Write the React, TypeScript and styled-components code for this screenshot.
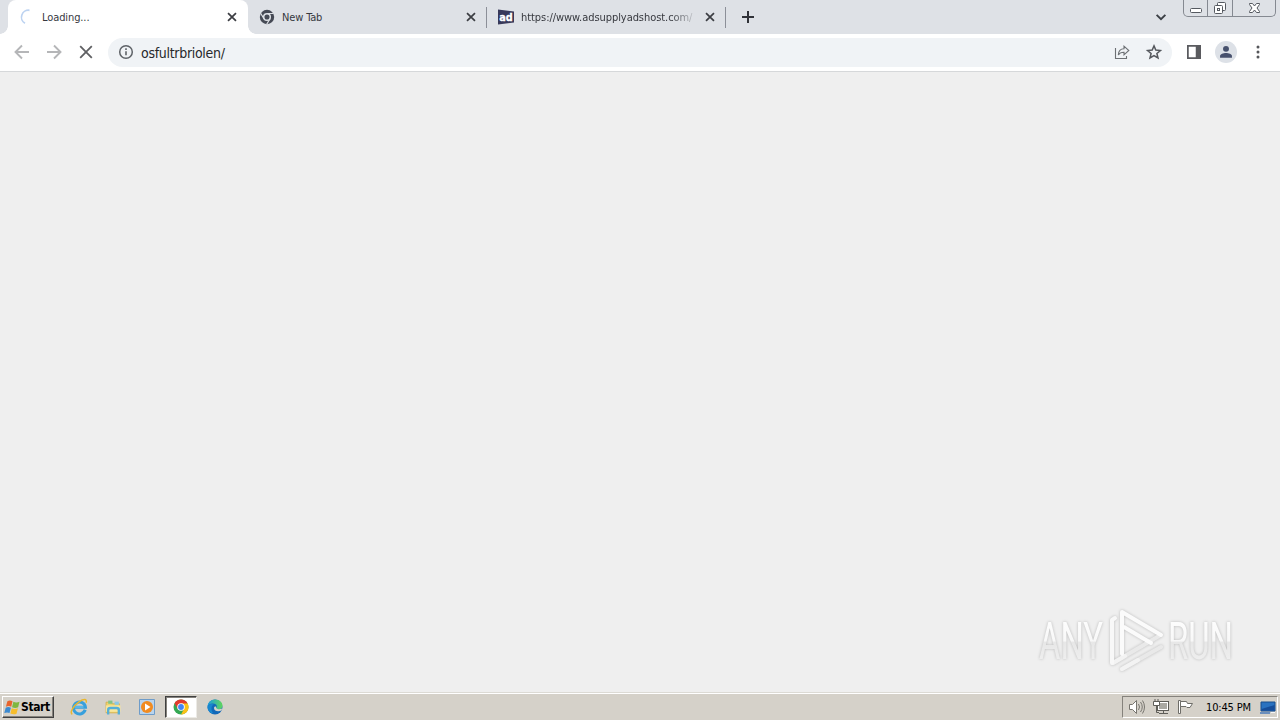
import type { ReactNode } from 'react';

import styled, { createGlobalStyle, css } from 'styled-components';

function App() {
  return (
    <Screen>
      <GlobalStyle />
      <TabStrip>
        <Tab $active>
          <Spinner />
          <TabTitle $spacing={-0.1}>Loading...</TabTitle>
          <CloseIcon />
        </Tab>
        <Tab>
          <ChromeGrayIcon />
          <TabTitle $spacing={-0.15}>New Tab</TabTitle>
          <CloseIcon />
        </Tab>
        <Tab>
          <AdIcon />
          <TabTitle $faded $spacing={-0.06}>
            https://www.adsupplyadshost.com/
          </TabTitle>
          <CloseIcon />
        </Tab>
        <NewTabButton>
          <Svg size={16}>
            <path d="M8 2v12M2 8h12" stroke="#303238" strokeWidth="2" />
          </Svg>
        </NewTabButton>
        <TabSearch>
          <Svg size={14}>
            <path d="M3 5.500 8 10.500 13 5.500" stroke="#3c4046" strokeWidth="2.200" />
          </Svg>
        </TabSearch>
        <WindowControls />
      </TabStrip>

      <Toolbar>
        <NavButton>
          <Svg size={16}>
            <path d="M15 8H2M8 1.5 1.5 8 8 14.5" stroke="#b5b6b8" strokeWidth="1.9" />
          </Svg>
        </NavButton>
        <NavButton>
          <Svg size={16}>
            <path d="M1 8h13M8 1.5 14.5 8 8 14.5" stroke="#b5b6b8" strokeWidth="1.9" />
          </Svg>
        </NavButton>
        <NavButton>
          <Svg size={16}>
            <path d="m2.200 2.200 11.600 11.600m0-11.600-11.600 11.600" stroke="#5f6063" strokeWidth="1.8" />
          </Svg>
        </NavButton>
        <AddressBar>
          <Svg size={16}>
            <circle cx="8" cy="8" r="6.3" stroke="#5f6368" strokeWidth="1.5" />
            <path d="M8 7.2v4M8 4.3v1.6" stroke="#5f6368" strokeWidth="1.6" />
          </Svg>
          <Url>osfultrbriolen/</Url>
          <Svg size={16}>
            <path
              d="M1.500 4v10.500h11V12M4.300 11c.2-4 2.200-6.200 5.700-6.200V2.200l4.800 4.300-4.800 4.300V8.300c-2.600 0-4.500.7-5.700 2.700z"
              stroke="#6d7074"
              strokeWidth="1.1"
            />
          </Svg>
          <Svg size={16}>
            <path
              d="m8 1.900 1.800 4.200 4.600.4-3.500 3 1.100 4.500-4-2.400-4 2.400 1.100-4.500-3.500-3 4.600-.4z"
              stroke="#55585d"
              strokeWidth="1.5"
            />
          </Svg>
        </AddressBar>
        <ToolbarActions>
          <Svg size={14}>
            <path d="M1 1h14v14H1z" stroke="#5a5b5f" strokeWidth="2" />
            <path d="M10 1h5v14h-5z" fill="#5a5b5f" />
          </Svg>
          <Avatar>
            <Svg size={14}>
              <circle cx="8" cy="4.400" r="3.400" fill="#47516d" />
              <path d="M1.200 14.500v-2C1.200 10 5 9 8 9s6.800 1 6.800 3.500v2z" fill="#47516d" />
            </Svg>
          </Avatar>
          <Svg size={16}>
            <circle cx="8" cy="3" r="1.500" fill="#55565a" />
            <circle cx="8" cy="8" r="1.500" fill="#55565a" />
            <circle cx="8" cy="13" r="1.500" fill="#55565a" />
          </Svg>
        </ToolbarActions>
      </Toolbar>

      <Page>
        <Watermark />
      </Page>

      <Taskbar>
        <StartButton>
          <WindowsIcon />
          <StartLabel>Start</StartLabel>
        </StartButton>
        <QuickLaunch>
          <Launcher>
            <ExplorerIcon />
          </Launcher>
          <Launcher>
            <FolderIcon />
          </Launcher>
          <Launcher>
            <MediaIcon />
          </Launcher>
          <Launcher $active>
            <ChromeIcon />
          </Launcher>
          <Launcher>
            <EdgeIcon />
          </Launcher>
        </QuickLaunch>
        <Tray>
          <SpeakerIcon />
          <NetworkIcon />
          <FlagIcon />
          <Clock>10:45 PM</Clock>
          <DesktopIcon />
        </Tray>
      </Taskbar>
    </Screen>
  );
}

export default App;

function Svg({ size, children }: { size: number; children: ReactNode }) {
  return (
    <svg width={size} height={size} viewBox="0 0 16 16" fill="none">
      {children}
    </svg>
  );
}

function Spinner() {
  return (
    <Svg size={16}>
      <path d="M10.500 1.300A7 7 0 0 0 6 14.300" stroke="#bdd3f1" strokeWidth="1.700" />
    </Svg>
  );
}

function CloseIcon() {
  return (
    <Svg size={12}>
      <path d="m2.700 2.700 10.600 10.600m0-10.600L2.700 13.300" stroke="#3c3e43" strokeWidth="2.300" />
    </Svg>
  );
}

function ChromeGrayIcon() {
  return (
    <Svg size={16}>
      <circle cx="8" cy="8" r="7.200" fill="#464a55" />
      <circle cx="8" cy="8" r="3.300" fill="#464a55" stroke="#dee1e6" strokeWidth="1.500" />
      <path d="M8 4.500h6.500M5 9.700 1.600 4.200M11 9.700l-3.300 5.500" stroke="#dee1e6" strokeWidth="1.200" />
    </Svg>
  );
}

function AdIcon() {
  return (
    <Svg size={16}>
      <path d="m0 .500 16 2v11l-16 2z" fill="#38395a" />
      <text
        x="1.300"
        y="12"
        fill="#fff"
        stroke="#fff"
        strokeWidth=".300"
        fontFamily="DejaVu Sans, sans-serif"
        fontSize="10.500"
        fontWeight="700"
        textLength="13.500"
        lengthAdjust="spacingAndGlyphs"
      >
        ad
      </text>
    </Svg>
  );
}

function WindowControls() {
  return (
    <Controls>
      <Control $width={24}>
        <svg width="14" height="12" viewBox="0 0 14 12">
          <rect x="1.500" y="6.500" width="11" height="4" rx="1" fill="#fff" stroke="#555960" />
        </svg>
      </Control>
      <Control $width={25}>
        <svg width="14" height="14" viewBox="0 0 14 14" fill="#fff" stroke="#555960">
          <rect x="4.500" y="1.500" width="8" height="8" rx="1" />
          <rect x="1.500" y="4.500" width="8" height="8" rx="1" />
          <rect x="4.500" y="7.500" width="2" height="2" />
        </svg>
      </Control>
      <Control $width={42}>
        <svg width="13" height="12" viewBox="0 0 13 12">
          <path
            d="M1.500 1.500h3l2 2.500 2-2.500h3v1L9 6l2.500 3.500v1h-3l-2-2.500-2 2.500h-3v-1L4 6 1.500 2.500z"
            fill="#fff"
            stroke="#555960"
          />
        </svg>
      </Control>
    </Controls>
  );
}

function Watermark() {
  return (
    <Mark width="212" height="76" viewBox="1030 602 212 76">
      <defs>
        <linearGradient id="letters" x1="0" y1="620" x2="0" y2="661" gradientUnits="userSpaceOnUse">
          <stop offset="0" stopColor="#fdfdfd" />
          <stop offset=".52" stopColor="#f8f8f8" />
          <stop offset=".53" stopColor="#e7e7e7" />
          <stop offset="1" stopColor="#efefef" />
        </linearGradient>
      </defs>
      <g
        fill="url(#letters)"
        fontFamily="Roboto, Liberation Sans, sans-serif"
        fontSize="51"
        fontWeight="400"
      >
        <text x="1039" y="659" textLength="64" lengthAdjust="spacingAndGlyphs">
          ANY
        </text>
        <text x="1168" y="659" textLength="65" lengthAdjust="spacingAndGlyphs">
          RUN
        </text>
      </g>
      <g fill="none" strokeLinecap="round" strokeLinejoin="round" strokeWidth="4">
        <path d="M1122 669l39-22M1113 663l46-27" stroke="#e9e9e9" />
        <path d="M1122 669l16-9M1113 663l12-7" stroke="#f3f3f3" />
        <path d="M1115 618l-3 2v43" stroke="#f8f8f8" />
        <path d="M1122 654v-42l39 23M1124 627l27 16" stroke="#fbfbfb" />
      </g>
    </Mark>
  );
}

function WindowsIcon() {
  return (
    <Svg size={17}>
      <path d="M3.200 2.200Q5.500.800 8 2.200L6.800 7.200Q4.500 6 1.800 7.200z" fill="#e8642d" />
      <path d="M8.800 2.700Q11.500 4 14.600 2.700L13.300 7.800Q10.500 9 7.600 7.700z" fill="#7fb740" />
      <path d="M1.600 8.200Q4 7 6.500 8.200L5.200 13.200Q3 12 .300 13.200z" fill="#3c8ad0" />
      <path d="M7.300 8.700Q10 10 13.100 8.800L11.800 13.800Q9 15 6 13.600z" fill="#f6bd2b" />
    </Svg>
  );
}

function ExplorerIcon() {
  return (
    <Svg size={18}>
      <path
        d="M13.500 10.500A5.300 5.300 0 1 1 13.700 8.200H4.500"
        stroke="#38a0dc"
        strokeWidth="2.700"
      />
      <path d="M4 8h8" stroke="#75c8f0" />
      <path
        d="M2 14.500C-.500 13 3 7 8 3.500c4-2.800 7.500-3 6.300.800"
        stroke="#e9b72f"
        strokeWidth="1.300"
      />
    </Svg>
  );
}

function FolderIcon() {
  return (
    <Svg size={17}>
      <path d="M1 3h5l1 1.500h6.500V13H1z" fill="#efd36e" stroke="#d5ae48" strokeWidth=".800" />
      <path d="M3 1.500h4v3H3z" fill="#84c486" />
      <path d="M9 2.500h4v3H9z" fill="#89c9e8" />
      <path d="M1 6h13.500v6H1z" fill="#f8e79c" />
      <path d="M3 14.500V10q0-1.500 2-1.500h6q2 0 2 1.500v4.500" stroke="#55afd8" strokeWidth="2.200" />
    </Svg>
  );
}

function MediaIcon() {
  return (
    <Svg size={16}>
      <path d="M.500.500h15v15h-15z" fill="#b9d4ed" stroke="#6e9cc9" />
      <circle cx="8" cy="8" r="6" fill="#f18b20" />
      <path d="m6 4.500 5.500 3.500L6 11.500z" fill="#fff" />
    </Svg>
  );
}

function ChromeIcon() {
  return (
    <Svg size={16}>
      <circle cx="8" cy="8" r="7.500" fill="#34a853" />
      <path d="M8 8 1.500 4.250A7.500 7.500 0 0 1 14.500 4.250z" fill="#e33b2e" />
      <path d="M1.500 4.250 5 10.200 8 8l1-3.600H3z" fill="#e33b2e" />
      <path d="M8 4.500h6.700A7.500 7.500 0 0 1 8 15.500L11 10z" fill="#fbc116" />
      <circle cx="8" cy="8" r="3.800" fill="#fff" />
      <circle cx="8" cy="8" r="2.900" fill="#4285f4" />
    </Svg>
  );
}

function EdgeIcon() {
  return (
    <Svg size={16}>
      <defs>
        <linearGradient id="edge-top">
          <stop stopColor="#1b9be0" />
          <stop offset="1" stopColor="#60d65b" />
        </linearGradient>
      </defs>
      <circle cx="8" cy="8" r="7.500" fill="#1268b8" />
      <path
        d="M.500 8C.500 3.500 4 .500 8 .500c4.500 0 7.500 3 7.500 6 0 2.500-1.800 3.900-4.200 3.900-1.600 0-2.300-.6-2.300-1.100 0-.4.800-.8.800-2C9.800 5.500 8 4.500 5.800 4.500 3 4.500.900 6 .500 8z"
        fill="url(#edge-top)"
      />
      <path
        d="M9 7.500c0 2.500 2 3.500 6.300 2l-.800 1.900c-3 1.500-7.500.8-7.500-2.400 0-1 .7-1.700 2-1.500z"
        fill="#d5d1ca"
      />
      <path d="M.500 8C1 5 4.500 4.300 7 5.500 4 6.500 3.500 11 6.500 14.500 3 14.500.500 11.500.500 8z" fill="#1987cf" />
    </Svg>
  );
}

function SpeakerIcon() {
  return (
    <svg width="18" height="16" viewBox="0 0 18 16" fill="none" stroke="#77756f">
      <path d="M1.500 5.500h3l4-4v13l-4-4h-3z" fill="#fff" />
      <path d="M10.500 5q2 3 0 6M12.500 3q3.500 5 0 10M14.500 1.500q4 6.500 0 13" />
    </svg>
  );
}

function NetworkIcon() {
  return (
    <svg width="17" height="16" viewBox="0 0 17 16" fill="none" stroke="#5e5d58">
      <rect x="4.500" y="2.500" width="11" height="9" fill="#fff" />
      <rect x="6.500" y="4.500" width="7" height="5" fill="#aaa9a3" stroke="#aaa9a3" />
      <path d="M6 14.500h9M10.500 12v2M3.500 7v6.500H6" />
      <path d="M.500 2.500h6v4h-6zM2 0v2M5 0v2" fill="#fff" />
    </svg>
  );
}

function FlagIcon() {
  return (
    <svg width="17" height="16" viewBox="0 0 17 16" fill="#fff" stroke="#6e6d68">
      <path d="M1.500 1.500h2v13h-2z" />
      <path d="M3.500 2.500h6l1 2h5l-2.500 4h-3l-1-1H3.500z" />
    </svg>
  );
}

function DesktopIcon() {
  return (
    <svg width="16" height="15" viewBox="0 0 16 15">
      <path d="M1 2h14v9H1z" fill="#2a72c0" stroke="#174c8b" />
      <path d="M1.500 9 14.500 5v5.500h-13z" fill="#164d99" />
      <path d="M0 12h10v2H0z" fill="#6b8fbd" />
      <path d="M11 12h4v1h-4z" fill="#f6f6f6" />
    </svg>
  );
}

const GlobalStyle = createGlobalStyle`
  * {
    box-sizing: border-box;
  }

  body {
    margin: 0;
    overflow: hidden;
    font-family: 'DejaVu Sans Condensed', 'DejaVu Sans', sans-serif;
  }

  svg {
    display: block;
    flex: none;
    overflow: visible;
  }
`;

const Screen = styled.div`
  width: 1280px;
  height: 720px;
  display: flex;
  flex-direction: column;
  background-color: #efefef;
`;

const TabStrip = styled.div`
  height: 34px;
  flex: none;
  padding-left: 8px;
  display: flex;
  background-color: #dee1e6;
`;

const Tab = styled.div<{ $active?: boolean }>`
  position: relative;
  width: 239px;
  height: 34px;
  padding: 0 9px 0 11px;
  display: flex;
  align-items: center;
  border-right: 1px solid transparent;
  border-image: linear-gradient(transparent 8px, #8c8f98 8px, #8c8f98 27px, transparent 27px) 1;

  ${p =>
    p.$active &&
    css`
      width: 240px;
      padding-right: 10px;
      border: 0;
      background-color: #fff;
      border-radius: 8px 8px 0 0;

      &::before,
      &::after {
        content: '';
        position: absolute;
        bottom: 0;
        width: 8px;
        height: 8px;
      }

      &::before {
        left: -8px;
        background: radial-gradient(circle at 0 0, transparent 7.5px, #fff 8px);
      }

      &::after {
        right: -8px;
        background: radial-gradient(circle at 100% 0, transparent 7.5px, #fff 8px);
      }
    `}
`;

const TabTitle = styled.span<{ $spacing: number; $faded?: boolean }>`
  flex: 1;
  min-width: 0;
  margin: 1px 6px 0 7px;
  white-space: nowrap;
  font-size: 11px;
  line-height: 16px;
  letter-spacing: ${p => p.$spacing}px;
  color: #36383e;
  ${p => p.$faded && 'mask-image: linear-gradient(90deg, #000 84%, transparent);'}
`;

const NewTabButton = styled.div`
  width: 44px;
  display: flex;
  align-items: center;
  justify-content: center;
`;

const TabSearch = styled.div`
  margin-left: auto;
  margin-right: 15px;
  display: flex;
  align-items: center;
`;

const Controls = styled.div`
  height: 17px;
  margin-right: 4px;
  display: flex;
  border: 1px solid #858991;
  border-top: 0;
  border-radius: 0 0 5px 5px;
`;

const Control = styled.div<{ $width: number }>`
  width: ${p => p.$width}px;
  height: 16px;
  display: flex;
  align-items: center;
  justify-content: center;

  &:not(:last-of-type) {
    border-right: 1px solid #858991;
  }
`;

const Toolbar = styled.div`
  height: 38px;
  flex: none;
  padding: 0 14px 1px 6px;
  display: flex;
  align-items: center;
  background-color: #fff;
  border-bottom: 1px solid #d6d8da;
`;

const NavButton = styled.div`
  width: 32px;
  display: flex;
  justify-content: center;
`;

const AddressBar = styled.div`
  width: 1064px;
  height: 29px;
  margin-left: 6px;
  padding: 0 10px;
  display: flex;
  flex: none;
  align-items: center;
  gap: 16px;
  background-color: #f0f3f6;
  border-radius: 15px;
`;

const Url = styled.span`
  flex: 1;
  margin: 1px 0 0 -9px;
  font-size: 14px;
  line-height: 20px;
  letter-spacing: -0.3px;
  color: #26282c;
`;

const ToolbarActions = styled.div`
  flex: 1;
  padding-left: 15px;
  display: flex;
  align-items: center;
  justify-content: space-between;
`;

const Avatar = styled.div`
  width: 22px;
  height: 22px;
  display: flex;
  align-items: center;
  justify-content: center;
  background-color: #dde1e7;
  border-radius: 50%;
`;

const Page = styled.main`
  flex: 1;
  min-height: 0;
  padding: 0 38px 14px 0;
  display: flex;
  align-items: flex-end;
  justify-content: flex-end;
`;

const Mark = styled.svg`
  filter: drop-shadow(0 0 1.5px rgba(0, 0, 0, 0.22));
`;

const Taskbar = styled.div`
  height: 28px;
  flex: none;
  padding: 2px 2px 1px;
  display: flex;
  align-items: center;
  background-color: #d5d1c9;
  border-top: 1px solid #dcdad4;
  box-shadow: inset 0 1px #fff;
`;

const StartButton = styled.div`
  width: 52px;
  height: 22px;
  padding-left: 1px;
  display: flex;
  align-items: center;
  border: 1px solid;
  border-color: #fff #404040 #404040 #fff;
  box-shadow: inset -1px -1px #85827c;
`;

const StartLabel = styled.span`
  font-size: 12px;
  font-weight: 700;
  letter-spacing: -0.4px;
  color: #000;
`;

const QuickLaunch = styled.div`
  margin-left: 9px;
  display: flex;
  gap: 2px;
`;

const Launcher = styled.div<{ $active?: boolean }>`
  width: 32px;
  height: 22px;
  display: flex;
  align-items: center;
  justify-content: center;

  ${p =>
    p.$active &&
    css`
      background-color: #fff;
      border: 1px solid;
      border-color: #404040 #eceae5 #eceae5 #404040;
      box-shadow: inset 1px 1px #85827c;
    `}
`;

const Tray = styled.div`
  width: 156px;
  height: 22px;
  margin-left: auto;
  padding: 0 1px 0 5px;
  display: flex;
  align-items: center;
  gap: 7px;
  border: 1px solid;
  border-color: #85827c #fff #fff #85827c;
`;

const Clock = styled.span`
  flex: 1;
  margin-left: 5px;
  font-size: 11px;
  letter-spacing: -0.15px;
  white-space: nowrap;
  color: #000;
`;
